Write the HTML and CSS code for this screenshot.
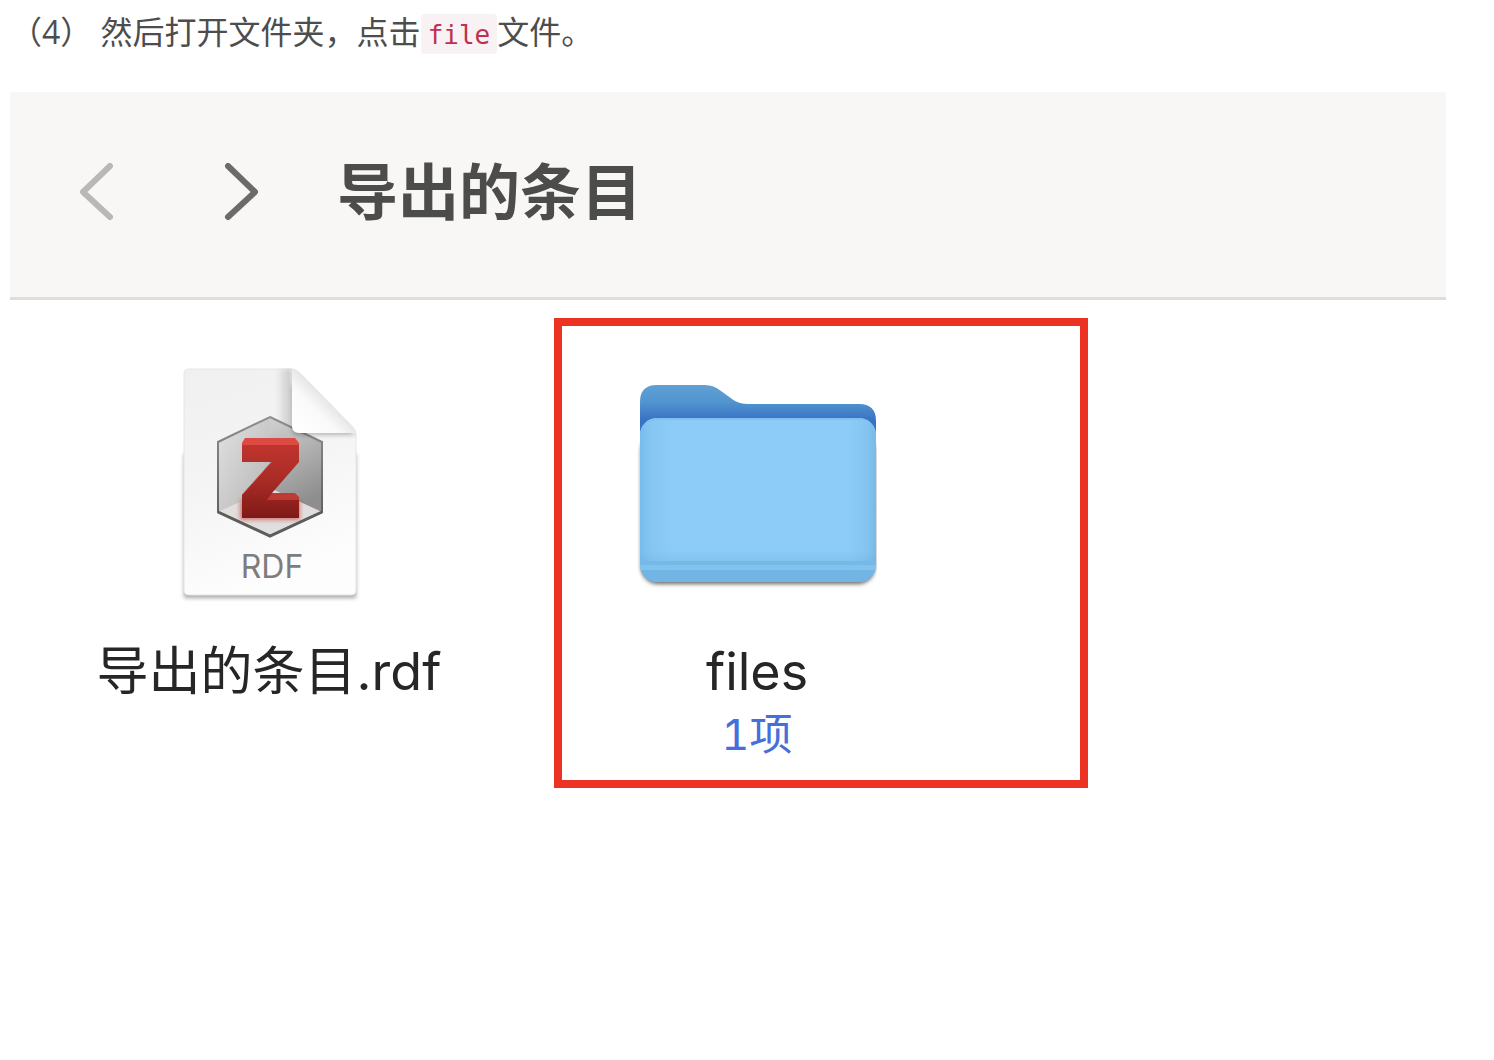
FILE: index.html
```
<!DOCTYPE html>
<html lang="zh-CN">
<head>
  <meta charset="UTF-8" />
  <meta name="viewport" content="width=device-width, initial-scale=1.0"/>
  <title>导出的条目</title>
  <link rel="stylesheet" href="styles.css">
</head>
<body>
  <main class="article">
    <p class="step">（4） 然后打开文件夹，点击<code>file</code>文件。</p>

    <section class="finder">
      <header class="toolbar">
        <div class="nav">
          <button class="nav-btn back" type="button" aria-label="后退">
            <svg width="36" height="60" viewBox="0 0 36 60"><path d="M32 3 L5 29 L32 54"/></svg>
          </button>
          <button class="nav-btn" type="button" aria-label="前进">
            <svg width="36" height="60" viewBox="0 0 36 60"><path d="M4 3 L31 29 L4 54"/></svg>
          </button>
        </div>
        <h1 class="title">导出的条目</h1>
      </header>

      <div class="items">
        <div class="item">
          <svg class="icon" viewBox="-1 0 240 240">
            <defs>
              <linearGradient id="paper" x1="0" y1="0" x2="0.3" y2="1">
                <stop offset="0" stop-color="#f0f0f0"/>
                <stop offset="0.5" stop-color="#f4f4f4"/>
                <stop offset="1" stop-color="#fdfdfd"/>
              </linearGradient>
              <linearGradient id="fold" x1="0" y1="1" x2="0.6" y2="0.4">
                <stop offset="0" stop-color="#ffffff"/>
                <stop offset="0.6" stop-color="#fafafa"/>
                <stop offset="1" stop-color="#dedede"/>
              </linearGradient>
              <linearGradient id="foldShade" x1="0" y1="0" x2="1" y2="0">
                <stop offset="0" stop-color="#000" stop-opacity="0"/>
                <stop offset="1" stop-color="#000" stop-opacity="0.18"/>
              </linearGradient>
              <linearGradient id="wallLeft" x1="0" y1="0" x2="1" y2="1">
                <stop offset="0" stop-color="#e2e2e2"/>
                <stop offset="1" stop-color="#b4b4b4"/>
              </linearGradient>
              <linearGradient id="wallRight" x1="0" y1="0" x2="0.3" y2="1">
                <stop offset="0" stop-color="#d2d2d2"/>
                <stop offset="1" stop-color="#8e8e8e"/>
              </linearGradient>
              <linearGradient id="rim" x1="0" y1="0" x2="0" y2="1">
                <stop offset="0" stop-color="#8f8f8f"/>
                <stop offset="1" stop-color="#555"/>
              </linearGradient>
              <linearGradient id="red" gradientUnits="userSpaceOnUse" x1="0" y1="80" x2="0" y2="154">
                <stop offset="0" stop-color="#c0352e"/>
                <stop offset="0.5" stop-color="#a92b26"/>
                <stop offset="1" stop-color="#7e1a17"/>
              </linearGradient>
              <filter id="soft" x="-20%" y="-20%" width="140%" height="140%"><feGaussianBlur stdDeviation="2"/></filter>
              <clipPath id="hex"><path d="M120 53 L172 78 V148 L120 172 L68 148 V78 Z"/></clipPath>
              <clipPath id="sheet"><path d="M33 4 H146 L207 66 V232 H33 Z"/></clipPath>
            </defs>
            <path d="M34 90 H206 V234 H34 Z" fill="#000" opacity="0.35" filter="url(#soft)"/>
            <path d="M39 5 H141 Q146 5 150 9 L202 62 Q206 66 206 71 V226 Q206 231 201 231 H39 Q34 231 34 226 V10 Q34 5 39 5 Z" fill="url(#paper)" stroke="#e6e6e6"/>
            <path d="M126 5 H142 V66 H126 Z" fill="url(#foldShade)" filter="url(#soft)" clip-path="url(#sheet)"/>
            <g clip-path="url(#hex)">
              <path d="M68 53 H120 V130 L68 150 Z" fill="url(#wallLeft)"/>
              <path d="M120 53 H172 V150 L120 130 Z" fill="url(#wallRight)"/>
              <path d="M68 148 L120 124 L172 148 L120 174 Z" fill="#e2dede"/>
              <path d="M90 136 H150 V156 H90 Z" fill="#c23a36" opacity="0.6" filter="url(#soft)"/>
            </g>
            <path d="M120 53 L172 78 V148 L120 172 L68 148 V78 Z" fill="none" stroke="url(#rim)" stroke-width="2"/>
            <path d="M68 148 L120 172 L172 148" fill="none" stroke="#5d5d5d" stroke-width="3"/>
            <!-- red block: two bars, the band between them, lit edges -->
            <g fill="url(#red)">
              <rect x="92" y="79" width="57" height="19"/>
              <rect x="92" y="136" width="57" height="18"/>
              <path d="M122 97 L149 79 V98 L122 129 V138 H92 V131 Z"/>
            </g>
            <path d="M95 74 H145 L149 79 V81 H92 V79 Z" fill="#dc4a43"/>
            <path d="M117 136 L122 129 H145 L149 133 V136 Z" fill="#c03a34"/>
            <path d="M92 131 L122 98" stroke="#cf453e" stroke-width="1" fill="none"/>
            <g clip-path="url(#sheet)">
              <path d="M142 20 L206 71 H148 Q142 71 142 63 Z" fill="#000" opacity="0.25" filter="url(#soft)"/>
            </g>
            <path d="M142 5 Q146 5 150 9 L202 62 Q205 65 206 69 H149 Q142 69 142 62 Z" fill="url(#fold)"/>
            <text class="ext" x="122" y="214" text-anchor="middle">RDF</text>
          </svg>
          <span class="name">导出的条目.rdf</span>
        </div>

        <div class="item selected">
          <svg class="icon" viewBox="0 0 240 240">
            <defs>
              <linearGradient id="tab" gradientUnits="userSpaceOnUse" x1="0" y1="20" x2="0" y2="56">
                <stop offset="0" stop-color="#61a0d5"/>
                <stop offset="0.5" stop-color="#5195cf"/>
                <stop offset="1" stop-color="#3972c4"/>
              </linearGradient>
              <linearGradient id="front" x1="0" y1="0" x2="1" y2="0">
                <stop offset="0" stop-color="#78bceb"/>
                <stop offset="0.05" stop-color="#86c6f3"/>
                <stop offset="0.14" stop-color="#8dccf8"/>
                <stop offset="0.88" stop-color="#8dccf8"/>
                <stop offset="0.96" stop-color="#84c4f0"/>
                <stop offset="1" stop-color="#77bae8"/>
              </linearGradient>
              <linearGradient id="base" x1="0" y1="0" x2="0" y2="1">
                <stop offset="0" stop-color="#68aedf" stop-opacity="0"/>
                <stop offset="0.3" stop-color="#68aedf" stop-opacity="0.25"/>
                <stop offset="1" stop-color="#68aedf" stop-opacity="0.3"/>
              </linearGradient>
              <clipPath id="panel"><rect x="3" y="54" width="236" height="164" rx="17"/></clipPath>
            </defs>
            <rect x="4" y="70" width="234" height="150" rx="17" fill="#000" opacity="0.6" filter="url(#soft)"/>
            <path d="M3 80 V38 Q3 21 20 21 H68 Q77 21 84 27 L95 35 Q101 40 112 40 H222 Q239 40 239 57 V80 Z" fill="url(#tab)"/>
            <rect x="3" y="54" width="236" height="164" rx="17" fill="url(#front)"/>
            <g clip-path="url(#panel)">
              <rect x="3" y="186" width="236" height="32" fill="url(#base)"/>
              <rect x="3" y="197" width="236" height="4" fill="#76b9e6"/>
              <rect x="3" y="201" width="236" height="5" fill="#82c2ee"/>
              <rect x="3" y="206" width="236" height="12" fill="#72b5e5"/>
              <path d="M3 71 Q3 55 20 55 H222 Q239 55 239 71" fill="none" stroke="#7fc0f0" stroke-width="2"/>
            </g>
          </svg>
          <span class="name">files</span>
          <span class="count">1项</span>
        </div>
      </div>
    </section>
  </main>
</body>
</html>
```

FILE: styles.css
```
* {
  margin: 0;
  padding: 0;
  box-sizing: border-box;
}

body {
  background: #fff;
  font-family: Inter, 'Noto Sans CJK SC', sans-serif;
}

.article {
  padding: 0 48px 0 10px;
}

.step {
  padding-bottom: 25px;
  font-family: 'Open Sans', 'Noto Sans CJK SC', sans-serif;
  font-size: 32px;
  line-height: 64px;
  color: #4d4d4d;
}

.step code {
  padding: 6px 7px 4px;
  border-radius: 4px;
  background: #f9f2f4;
  color: #c0304f;
  font-family: 'DejaVu Sans Mono', monospace;
  font-size: 26px;
}

.toolbar {
  display: flex;
  align-items: center;
  gap: 77px;
  padding: 71px 68px 74px;
  background: #f8f7f5;
  border-bottom: 3px solid #dedede;
}

.nav {
  display: flex;
  gap: 110px;
}

.nav-btn {
  display: flex;
  border: none;
  background: none;
  color: #6b6b6b;
  cursor: pointer;
}

.nav-btn.back {
  color: #b8b8b6;
}

.nav-btn path {
  fill: none;
  stroke: currentColor;
  stroke-width: 6;
  stroke-linecap: round;
  stroke-linejoin: round;
}

.title {
  font-size: 61px;
  font-weight: 700;
  line-height: 60px;
  color: #4c4c4a;
}

.items {
  display: flex;
  align-items: flex-start;
  gap: 83px;
  padding: 18px 0 0 57px;
}

.item {
  display: flex;
  flex-direction: column;
  align-items: center;
  min-width: 404px;
  padding: 38px 0 16px;
  border: 8px solid transparent;
}

.item.selected {
  padding-right: 128px;
  min-width: 534px;
  border-color: #eb3223;
}

.icon {
  width: 240px;
  height: 240px;
  margin-bottom: 36px;
}

.ext {
  font-size: 32px;
  fill: #7d7d7d;
}

.name {
  font-size: 52px;
  line-height: 64px;
  color: #262626;
}

.count {
  font-size: 43px;
  font-variant-numeric: tabular-nums;
  line-height: 60px;
  color: #456fdb;
}
```
